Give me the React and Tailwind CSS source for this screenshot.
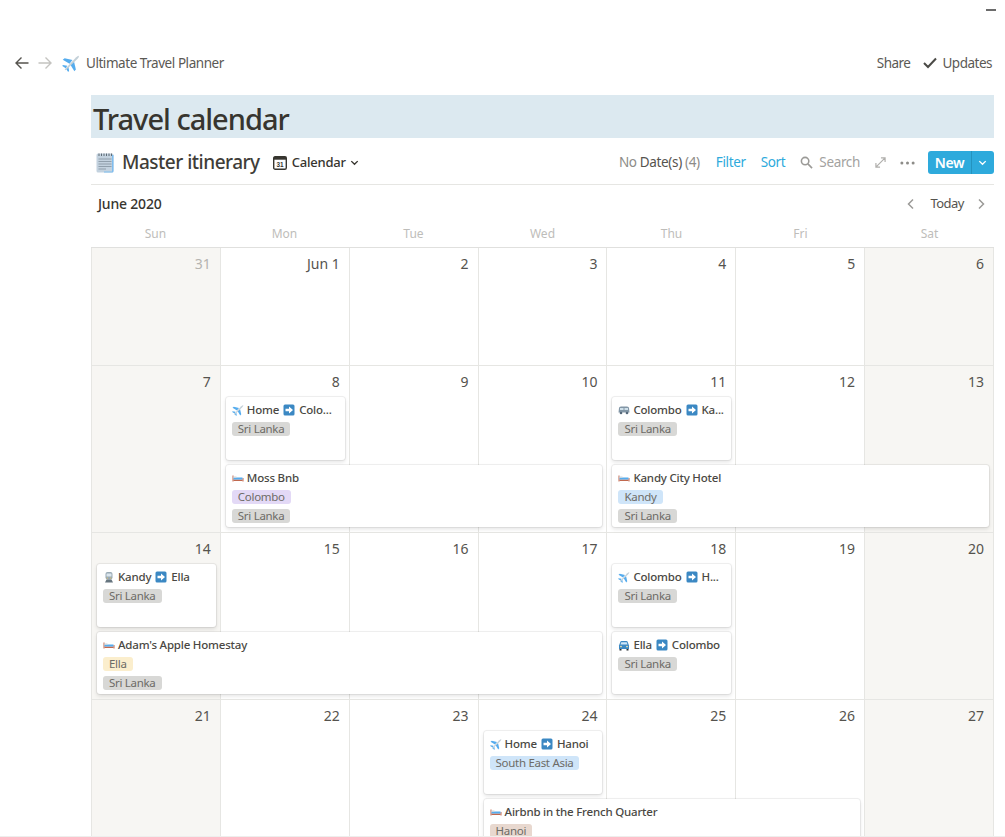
import React from "react";

const Plane = ({ className }) => (
  <svg viewBox="0 0 24 24" className={className}>
    <path d="M14 8 L3.5 5.5 L1 7.5 L10 13 Z" fill="#55acee" />
    <path d="M16 10 L18.5 20.5 L16.5 23 L11 14 Z" fill="#55acee" />
    <path d="M7 15.5 L1 14.5 L0.5 16 L5 19 Z" fill="#55acee" />
    <path d="M8.5 17 L9.5 23 L8 23.5 L5 19 Z" fill="#55acee" />
    <path d="M3.5 20.5 L18.5 4.5 Q21.5 2 22.5 2.5 Q23.2 3.5 20.5 6.5 L5 21.5 Z" fill="#c3d0d8" />
  </svg>
);

const Bed = ({ className }) => (
  <svg viewBox="0 0 24 24" className={className}>
    <rect x="1" y="7" width="2" height="12" fill="#c1694f" />
    <rect x="21" y="12" width="2" height="7" fill="#c1694f" />
    <rect x="3" y="15" width="18" height="3" fill="#c1694f" />
    <rect x="3" y="11" width="18" height="4" fill="#55acee" />
    <rect x="3" y="9" width="6" height="3" fill="#ccd6dd" />
  </svg>
);

const Arrow = ({ className }) => (
  <svg viewBox="0 0 24 24" className={className}>
    <rect x="1" y="1" width="22" height="22" rx="3" fill="#3b88c3" />
    <path d="M5 9.5 H12 V5 L20 12 L12 19 V14.5 H5 Z" fill="#fff" />
  </svg>
);

const Bus = ({ className }) => (
  <svg viewBox="0 0 24 24" className={className}>
    <path d="M2 8 Q2 5 6 5 H18 Q22 5 22 8 L23 17 H1 Z" fill="#8296a6" />
    <rect x="4" y="8" width="7" height="4" fill="#cfe0ea" />
    <rect x="13" y="8" width="7" height="4" fill="#cfe0ea" />
    <circle cx="6" cy="18" r="2.6" fill="#55687a" />
    <circle cx="18" cy="18" r="2.6" fill="#55687a" />
  </svg>
);

const Train = ({ className }) => (
  <svg viewBox="0 0 24 24" className={className}>
    <rect x="5" y="2" width="14" height="15" rx="4" fill="#99aab5" />
    <rect x="7" y="5" width="10" height="6" rx="1" fill="#dbe6ee" />
    <circle cx="8.5" cy="14" r="1.2" fill="#ffcc4d" />
    <circle cx="15.5" cy="14" r="1.2" fill="#ffcc4d" />
    <path d="M7 17 H17 L20 23 H4 Z" fill="#66757f" />
  </svg>
);

const Car = ({ className }) => (
  <svg viewBox="0 0 24 24" className={className}>
    <path d="M2 13 L5 5 Q5.5 4 7 4 H17 Q18.5 4 19 5 L22 13 V20 H2 Z" fill="#3b88c3" />
    <path d="M6.5 6.5 H17.5 L19 11 H5 Z" fill="#cfe6f7" />
    <circle cx="6" cy="15" r="1.7" fill="#ffe8a0" />
    <circle cx="18" cy="15" r="1.7" fill="#ffe8a0" />
    <rect x="3" y="20" width="4" height="3" fill="#292f33" />
    <rect x="17" y="20" width="4" height="3" fill="#292f33" />
  </svg>
);

const Notepad = ({ className }) => (
  <svg viewBox="0 0 18 21" className={className}>
    <rect x="0.5" y="1.5" width="17" height="19" rx="1.5" fill="#c3d2df" />
    <path d="M16 3 H17.5 V19 Q17.5 20.5 16 20.5 H8 V19.5 H16 Z" fill="#7fbdf0" />
    <g stroke="#8a99a6" strokeWidth="0.9">
      <path d="M2.5 7 H15.5 M2.5 9.5 H15.5 M2.5 12 H15.5 M2.5 14.5 H15.5 M2.5 17 H10" />
    </g>
    <g stroke="#5f6b75" strokeWidth="1" fill="none">
      <path d="M3 4 V1.5 M5.5 4 V1.5 M8 4 V1.5 M10.5 4 V1.5 M13 4 V1.5 M15.5 4 V1.5" />
    </g>
  </svg>
);

const CalIcon = ({ className }) => (
  <svg viewBox="0 0 14 14" className={className}>
    <rect x="0.7" y="0.7" width="12.6" height="12.6" rx="1.6" fill="#fff" stroke="#37352f" strokeWidth="1.4" />
    <rect x="0.7" y="0.7" width="12.6" height="3" fill="#37352f" />
    <text x="7" y="11" textAnchor="middle" fontSize="6.4" fontWeight="700" fill="#37352f" fontFamily="Liberation Sans, sans-serif">31</text>
  </svg>
);

const Chevron = ({ className, d, stroke = "#37352f", w = 1.5 }) => (
  <svg viewBox="0 0 12 12" fill="none" stroke={stroke} strokeWidth={w} className={className}>
    <path d={d} />
  </svg>
);

const gray = "bg-[#d8d8d6]";
const SL = { t: "Sri Lanka", c: gray };

const Tag = ({ t, c }) => (
  <div className={`h-[14px] w-fit rounded-[3px] px-[6px] text-[11.5px] leading-[14px] tracking-[-0.3px] text-[#6d6b66] whitespace-nowrap ${c}`}>{t}</div>
);

const Card = ({ pos, icon, parts, tags }) => (
  <div className={`${pos} mx-[5px] overflow-hidden rounded-[3px] bg-white px-[6px] pt-[5px] shadow-[0_0_0_1px_rgba(15,15,15,0.06),0_2px_4px_rgba(15,15,15,0.12)]`}>
    <div className="flex h-[16px] items-center gap-[4px] whitespace-nowrap text-[11.5px] font-medium leading-[16px] tracking-[-0.2px] text-[#4a4843]">
      <span className="mr-[-1px] flex shrink-0">{icon}</span>
      {parts.map((p, i) =>
        p === ">" ? <Arrow key={i} className="h-[12px] w-[12px] shrink-0" /> : <span key={i}>{p}</span>
      )}
    </div>
    <div className="mt-[4px] flex flex-col gap-[5px]">
      {tags.map((t) => (
        <Tag key={t.t} {...t} />
      ))}
    </div>
  </div>
);

const ic = "h-[12px] w-[12px] shrink-0";

const weeks = [
  {
    rows: "grid-rows-[118px]",
    days: ["31", "Jun 1", "2", "3", "4", "5", "6"],
    muted: true,
    cards: [],
  },
  {
    rows: "grid-rows-[26px_63px_62px_1px]",
    days: ["7", "8", "9", "10", "11", "12", "13"],
    cards: [
      { pos: "col-start-2 col-span-1 row-start-2", icon: <Plane className={ic} />, parts: ["Home", ">", "Colo..."], tags: [SL] },
      { pos: "col-start-5 col-span-1 row-start-2", icon: <Bus className={ic} />, parts: ["Colombo", ">", "Ka..."], tags: [SL] },
      { pos: "col-start-2 col-span-3 row-start-3", icon: <Bed className={ic} />, parts: ["Moss Bnb"], tags: [{ t: "Colombo", c: "bg-[#e3d9f6]" }, SL] },
      { pos: "col-start-5 col-span-3 row-start-3", icon: <Bed className={ic} />, parts: ["Kandy City Hotel"], tags: [{ t: "Kandy", c: "bg-[#cfe5f9]" }, SL] },
    ],
  },
  {
    rows: "grid-rows-[26px_63px_62px_1px]",
    days: ["14", "15", "16", "17", "18", "19", "20"],
    cards: [
      { pos: "col-start-1 col-span-1 row-start-2", icon: <Train className={ic} />, parts: ["Kandy", ">", "Ella"], tags: [SL] },
      { pos: "col-start-5 col-span-1 row-start-2", icon: <Plane className={ic} />, parts: ["Colombo", ">", "H..."], tags: [SL] },
      { pos: "col-start-1 col-span-4 row-start-3", icon: <Bed className={ic} />, parts: ["Adam's Apple Homestay"], tags: [{ t: "Ella", c: "bg-[#fbeecd]" }, SL] },
      { pos: "col-start-5 col-span-1 row-start-3", icon: <Car className={ic} />, parts: ["Ella", ">", "Colombo"], tags: [SL] },
    ],
  },
  {
    rows: "grid-rows-[26px_63px_62px_1px]",
    days: ["21", "22", "23", "24", "25", "26", "27"],
    cards: [
      { pos: "col-start-4 col-span-1 row-start-2", icon: <Plane className={ic} />, parts: ["Home", ">", "Hanoi"], tags: [{ t: "South East Asia", c: "bg-[#cfe5f9]" }] },
      { pos: "col-start-4 col-span-3 row-start-3", icon: <Bed className={ic} />, parts: ["Airbnb in the French Quarter"], tags: [{ t: "Hanoi", c: "bg-[#e8d8cf]" }] },
    ],
  },
];

const colStart = ["col-start-1", "col-start-2", "col-start-3", "col-start-4", "col-start-5", "col-start-6", "col-start-7"];

const Week = ({ w }) => (
  <div className={`grid grid-cols-7 gap-y-[5px] ${w.rows}`}>
    {w.days.map((d, i) => (
      <div
        key={d}
        className={`${colStart[i]} row-start-1 row-span-full border-r border-b border-[#e6e6e3] pr-[9px] pt-[6px] text-right text-[14px] leading-[20px] ${i === 0 || i === 6 ? "bg-[#f7f6f3]" : "bg-white"} ${w.muted && i === 0 ? "text-[#b5b4b0]" : "text-[#55534e]"}`}
      >
        {d}
      </div>
    ))}
    {w.cards.map((c, i) => (
      <Card key={i} {...c} />
    ))}
  </div>
);

export default function App() {
  return (
    <div className="relative h-[837px] w-[1005px] overflow-hidden bg-white font-['Noto_Sans',sans-serif] text-[#37352f]">
      <div className="flex h-[19px] justify-end pr-[9px] pt-[9px]">
        <div className="h-[2px] w-[10px] bg-[#6b6b6b]" />
      </div>

      <header className="mt-[28px] flex h-[32px] items-center justify-between pl-[15px] pr-[13px] text-[13.5px] text-[#5b5955]">
        <div className="flex items-center">
          <svg viewBox="0 0 14 14" fill="none" stroke="#55534e" strokeWidth="1.4" className="h-[14px] w-[14px]">
            <path d="M13.5 7 H1 M6.5 1.5 L1 7 L6.5 12.5" />
          </svg>
          <svg viewBox="0 0 14 14" fill="none" stroke="#c4c3c0" strokeWidth="1.4" className="ml-[9px] h-[14px] w-[14px]">
            <path d="M0.5 7 H13 M7.5 1.5 L13 7 L7.5 12.5" />
          </svg>
          <Plane className="ml-[10px] h-[18px] w-[18px]" />
          <span className="ml-[6px] tracking-[-0.45px]">Ultimate Travel Planner</span>
        </div>
        <div className="flex items-center">
          <span className="tracking-[-0.5px]">Share</span>
          <svg viewBox="0 0 14 12" fill="none" stroke="#4b4a46" strokeWidth="2" className="ml-[13px] h-[12px] w-[14px]">
            <path d="M1 6 L5 10 L13 1.5" />
          </svg>
          <span className="ml-[5px] tracking-[-0.5px]">Updates</span>
        </div>
      </header>

      <main className="ml-[91px] mr-[11px]">
        <h1 className="mt-[16px] h-[43px] bg-[#dce9f0] pl-[2px] text-[29px] font-medium leading-[47px] tracking-[-1px] text-[#37352f]">
          Travel calendar
        </h1>

        <div className="mt-[2px] flex h-[45px] items-center border-b border-[#e6e6e3] pt-[1px]">
          <Notepad className="ml-[5px] h-[21px] w-[18px]" />
          <span className="ml-[8px] text-[19px] font-medium tracking-[-0.5px] text-[#3f3d38]">Master itinerary</span>
          <CalIcon className="ml-[13px] h-[14px] w-[14px]" />
          <span className="ml-[5px] text-[13px] font-medium tracking-[-0.2px]">Calendar</span>
          <Chevron d="M2.5 4.5 L6 8 L9.5 4.5" className="ml-[3px] h-[11px] w-[11px]" />
          <div className="ml-auto flex items-center text-[13.5px] tracking-[-0.35px]">
            <span className="text-[#8d8c88]">
              No <span className="text-[#55534e]">Date(s)</span> (4)
            </span>
            <span className="ml-[16px] text-[#2eaadc]">Filter</span>
            <span className="ml-[15px] text-[#2eaadc]">Sort</span>
            <svg viewBox="0 0 14 14" fill="none" stroke="#9b9a97" strokeWidth="1.7" className="ml-[15px] h-[13px] w-[13px]">
              <circle cx="5.5" cy="5.5" r="4" />
              <path d="M8.5 8.5 L13 13" />
            </svg>
            <span className="ml-[6px] text-[#a3a29f]">Search</span>
            <svg viewBox="0 0 12 12" fill="none" stroke="#b0afac" strokeWidth="1.3" className="ml-[15px] h-[11px] w-[11px]">
              <path d="M1 11 L11 1 M6.5 1 H11 V5.5 M1 6.5 V11 H5.5" />
            </svg>
            <svg viewBox="0 0 16 4" fill="#8d8c88" className="ml-[14px] h-[4px] w-[15px]">
              <circle cx="2" cy="2" r="1.6" />
              <circle cx="8" cy="2" r="1.6" />
              <circle cx="14" cy="2" r="1.6" />
            </svg>
            <div className="ml-[13px] flex h-[23px] w-[66px] items-center rounded-[3px] bg-[#2eaadc] text-white">
              <span className="w-[44px] border-r border-[#2493bf] text-center text-[14px] font-semibold leading-[23px]">New</span>
              <Chevron d="M2.5 4.5 L6 8 L9.5 4.5" stroke="#fff" className="ml-[5px] h-[11px] w-[11px]" />
            </div>
          </div>
        </div>

        <div className="flex h-[39px] items-center justify-between px-[7px] pb-[2px]">
          <span className="text-[14px] font-medium tracking-[-0.2px] text-[#37352f]">June 2020</span>
          <div className="flex items-center text-[13px] text-[#55534e]">
            <Chevron d="M8 1.5 L3.5 6 L8 10.5" stroke="#9b9a97" className="h-[12px] w-[12px]" />
            <span className="ml-[13px] mr-[11px] tracking-[-0.5px]">Today</span>
            <Chevron d="M4 1.5 L8.5 6 L4 10.5" stroke="#9b9a97" className="h-[12px] w-[12px]" />
          </div>
        </div>

        <div className="grid h-[24px] grid-cols-7 border-b border-[#e0e0de] text-center text-[12px] leading-[20px] text-[#bebdba]">
          {["Sun", "Mon", "Tue", "Wed", "Thu", "Fri", "Sat"].map((d) => (
            <div key={d}>{d}</div>
          ))}
        </div>

        <div className="h-[588px] overflow-hidden border-l border-[#e6e6e3]">
          {weeks.map((w, i) => (
            <Week key={i} w={w} />
          ))}
        </div>
      </main>
      <div className="h-[1px] bg-[#eeeeec]" />
    </div>
  );
}
